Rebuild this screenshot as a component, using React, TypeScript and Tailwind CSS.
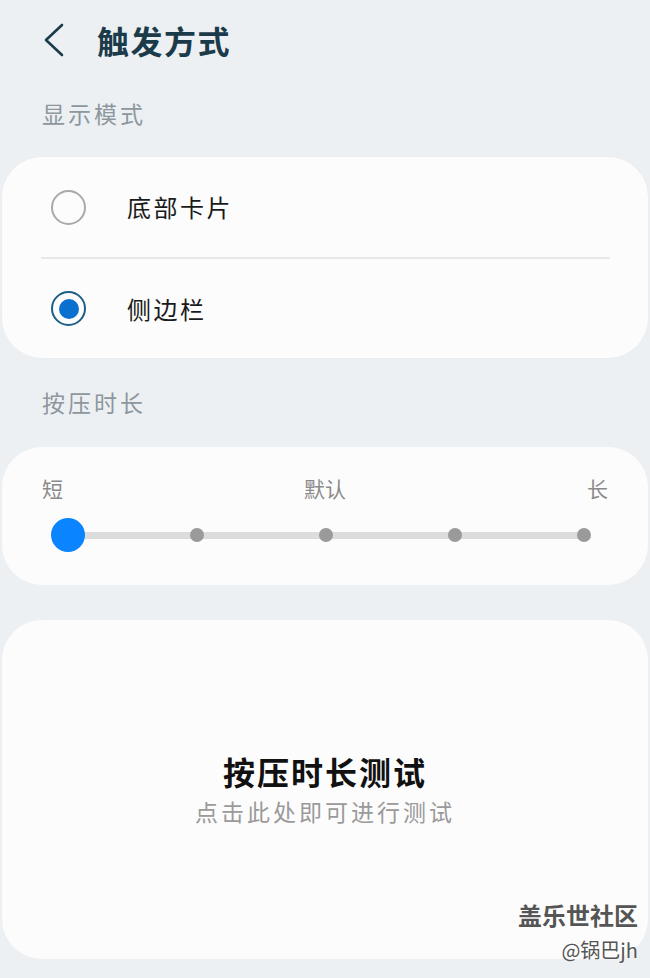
const font = { fontFamily: '"Noto Sans CJK SC", "Noto Sans", sans-serif' };

function Radio({ checked }: { checked?: boolean }) {
  if (checked) {
    return (
      <div className="w-[35px] h-[35px] rounded-full border-2 border-[#1d5f86] flex items-center justify-center shrink-0">
        <div className="w-[20px] h-[20px] rounded-full bg-[#0b6fd0]" />
      </div>
    );
  }
  return <div className="w-[35px] h-[35px] rounded-full border-2 border-[#a9a9a9] shrink-0" />;
}

export default function App() {
  const stops = [0, 25, 50, 75, 100];

  return (
    <div className="relative w-[650px] h-[978px] bg-[#edf0f2] overflow-hidden" style={font}>
      {/* HEADER */}
      <div className="h-[80px] flex items-center pl-[43px]">
        <svg width="22" height="34" viewBox="0 0 22 34" fill="none">
          <polyline
            points="19,2 3,17 19,32"
            stroke="#1b3b4b"
            strokeWidth="2.6"
            strokeLinecap="round"
            strokeLinejoin="round"
          />
        </svg>
        <h1 className="ml-[32px] text-[32px] font-bold text-[#1b3b4b] tracking-[1.5px]">触发方式</h1>
      </div>

      {/* DISPLAY MODE */}
      <div className="h-[77px] flex items-center pl-[42px] pb-[10px]">
        <span className="text-[23px] text-[#8c979e] tracking-[3px]">显示模式</span>
      </div>

      <div className="mx-[2px] rounded-[40px] bg-[#fcfcfc] shadow-[0_0_2px_rgba(0,0,0,0.03)]">
        <div className="h-[100px] flex items-center pl-[49px]">
          <Radio />
          <span className="ml-[41px] text-[24px] text-[#1a1a1a] tracking-[2.5px]">底部卡片</span>
        </div>
        <div className="ml-[39px] mr-[38px] h-[2px] bg-[#e6e8ea]" />
        <div className="h-[99px] flex items-center pl-[49px]">
          <Radio checked />
          <span className="ml-[41px] text-[24px] text-[#1a1a1a] tracking-[2.5px]">侧边栏</span>
        </div>
      </div>

      {/* PRESS DURATION */}
      <div className="h-[89px] flex items-center pl-[42px]">
        <span className="text-[23px] text-[#8c979e] tracking-[3px]">按压时长</span>
      </div>

      <div className="mx-[2px] h-[138px] rounded-[40px] bg-[#fcfcfc] pt-[28px]">
        <div className="relative h-[26px] mx-[40px] text-[21px] text-[#8a8a8a] leading-[26px]">
          <span className="absolute left-0">短</span>
          <span className="absolute left-1/2 -translate-x-1/2">默认</span>
          <span className="absolute right-0">长</span>
        </div>
        <div className="mt-[17px] ml-[66px] mr-[64px] relative h-[34px] flex items-center">
          <div className="w-full h-[7px] bg-[#dcdcdc]" />
          {stops.map((p) =>
            p === 0 ? (
              <div
                key={p}
                className="absolute top-1/2 w-[34px] h-[34px] -translate-x-1/2 -translate-y-1/2 rounded-full bg-[#0a84ff]"
                style={{ left: `${p}%` }}
              />
            ) : (
              <div
                key={p}
                className="absolute top-1/2 w-[14px] h-[14px] -translate-x-1/2 -translate-y-1/2 rounded-full bg-[#9a9a9a]"
                style={{ left: `${p}%` }}
              />
            )
          )}
        </div>
      </div>

      {/* TEST AREA */}
      <div className="mt-[35px] mx-[2px] h-[339px] rounded-[40px] bg-[#fcfcfc] flex flex-col items-center pt-[129px]">
        <p className="text-[32px] font-bold text-[#111] tracking-[2px] leading-[44px]">按压时长测试</p>
        <p className="mt-[2px] text-[23px] text-[#9a9a9a] tracking-[3px] leading-[32px]">点击此处即可进行测试</p>
      </div>

      {/* WATERMARK */}
      <div className="absolute right-[12px] top-[903px] flex flex-col items-end leading-none">
        <span className="text-[24px] font-bold text-[#555] [text-shadow:0_0_2px_#fff]">盖乐世社区</span>
        <span className="mt-[13px] text-[20px] text-[#555] [text-shadow:0_0_2px_#fff]">@锅巴jh</span>
      </div>
    </div>
  );
}
